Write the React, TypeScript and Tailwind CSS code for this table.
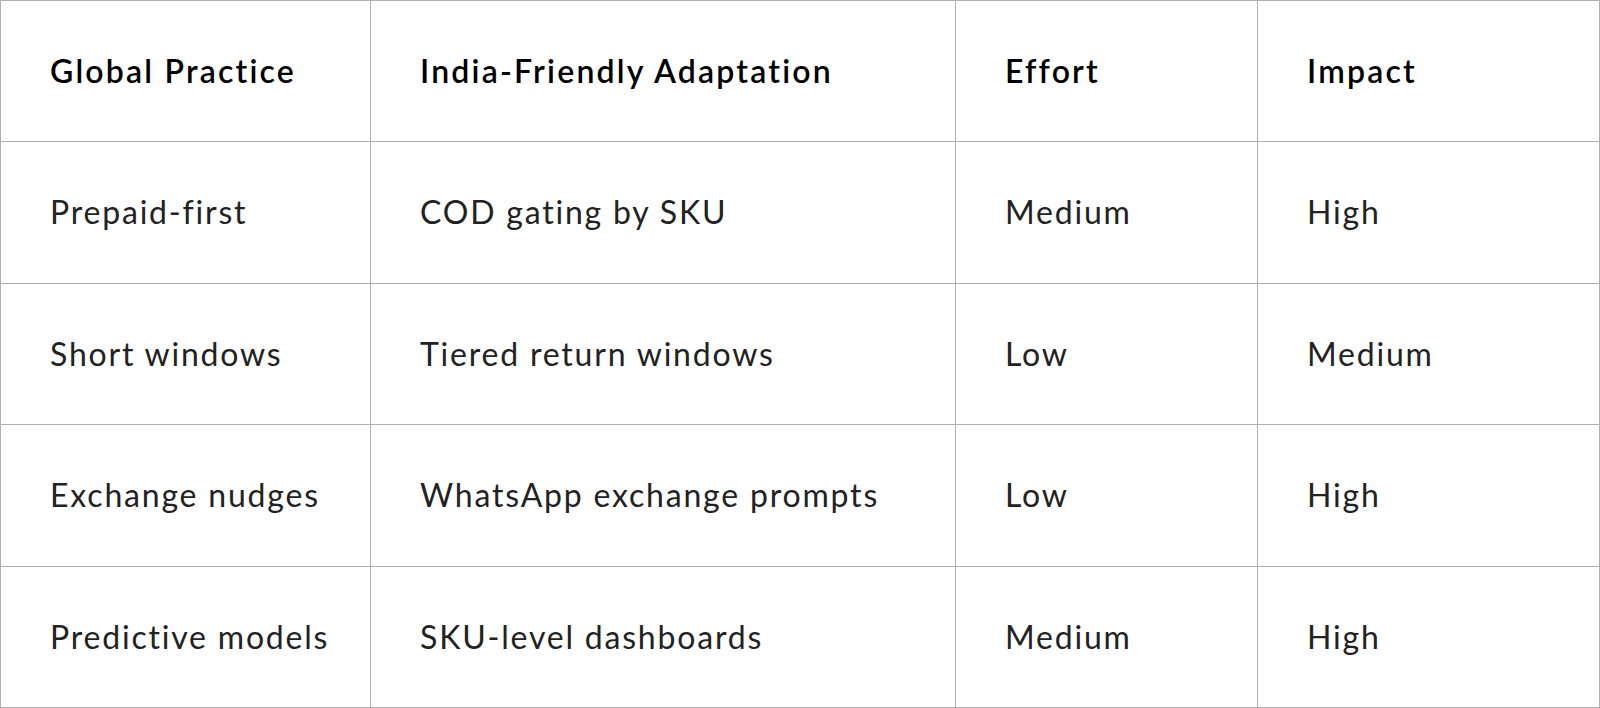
const rows = [
  ["Prepaid-first", "COD gating by SKU", "Medium", "High"],
  ["Short windows", "Tiered return windows", "Low", "Medium"],
  ["Exchange nudges", "WhatsApp exchange prompts", "Low", "High"],
  ["Predictive models", "SKU-level dashboards", "Medium", "High"],
];

const headers = ["Global Practice", "India-Friendly Adaptation", "Effort", "Impact"];

export default function App() {
  return (
    <div className="w-[1600px] h-[708px] bg-white font-['Lato',sans-serif]">
      <table className="w-full h-full border-collapse table-fixed">
        <colgroup>
          <col className="w-[370px]" />
          <col className="w-[585px]" />
          <col className="w-[302px]" />
          <col />
        </colgroup>
        <thead>
          <tr className="h-[141px]">
            {headers.map((h) => (
              <th
                key={h}
                className="border border-[#b0b0b0] pl-[49px] text-left align-middle text-[32px] font-semibold text-black tracking-[2.2px]"
              >
                {h}
              </th>
            ))}
          </tr>
        </thead>
        <tbody>
          {rows.map((r) => (
            <tr key={r[0]} className="h-[141px]">
              {r.map((c, i) => (
                <td
                  key={i}
                  className="border border-[#b0b0b0] pl-[49px] text-left align-middle text-[32px] text-[#222] tracking-[1.8px]"
                >
                  {c}
                </td>
              ))}
            </tr>
          ))}
        </tbody>
      </table>
    </div>
  );
}
